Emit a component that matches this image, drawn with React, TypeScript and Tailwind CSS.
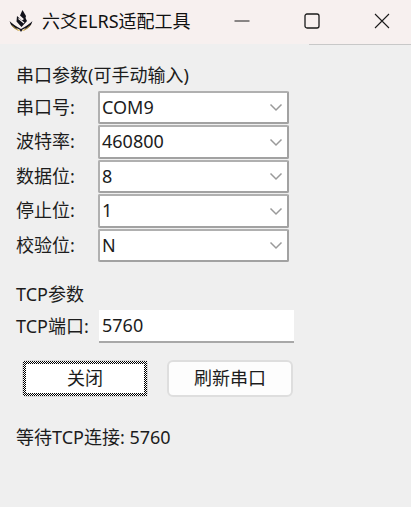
import React from "react";

const comboRows = [
  { label: "串口号:", value: "COM9" },
  { label: "波特率:", value: "460800" },
  { label: "数据位:", value: "8" },
  { label: "停止位:", value: "1" },
  { label: "校验位:", value: "N" },
];

function Logo() {
  return (
    <svg width="24" height="22" viewBox="0 0 24 22" className="shrink-0">
      <path d="M13.5 0 L17 6 L16 10 L11 5.5 Z" fill="#12121a" />
      <path d="M8 6 L13 10.5 L16.5 8 L18 11 L12.5 17 L7.5 11.5 Z" fill="#12121a" />
      <path d="M9.5 8.5 L15 13" stroke="#f7f0ef" strokeWidth="1.1" />
      <path d="M0.5 11 C2 15 6 18 10.5 19.5 L12 22 L13.5 19.5 C18 18 22 15 23.5 11 C21 13.5 17 16.5 12 19 C7 16.5 3 13.5 0.5 11 Z" fill="#12121a" />
      <path d="M1 12 C1.5 15 4 18 9 20.5 C7 17 4 14 1 12 Z" fill="#12121a" />
      <path d="M23 12 C22.5 15 20 18 15 20.5 C17 17 20 14 23 12 Z" fill="#12121a" />
      <path d="M3 15.5 C5 18 8 20 10.5 20.5" stroke="#d9b24c" strokeWidth="1" fill="none" />
      <path d="M21 15.5 C19 18 16 20 13.5 20.5" stroke="#d9b24c" strokeWidth="1" fill="none" />
    </svg>
  );
}

function TitleBar() {
  return (
    <div className="relative flex h-[44px] items-center bg-[#f7f0ef] pb-[3px] pl-[9px]">
      <Logo />
      <span className="ml-[9px] text-[18px] leading-[24px] whitespace-nowrap text-[#111]">六爻ELRS适配工具</span>
      <div className="ml-auto flex gap-[12px]">
        <div className="flex w-[58px] items-center justify-center">
          <svg width="16" height="16" viewBox="0 0 16 16">
            <path d="M0.5 8 H15.5" stroke="#1a1a1a" strokeWidth="1" />
          </svg>
        </div>
        <div className="flex w-[58px] items-center justify-center">
          <svg width="16" height="16" viewBox="0 0 16 16">
            <rect x="1" y="1" width="14" height="14" rx="2" fill="none" stroke="#1a1a1a" strokeWidth="1.3" />
          </svg>
        </div>
        <div className="flex w-[58px] items-center justify-center">
          <svg width="16" height="16" viewBox="0 0 16 16">
            <path d="M1 1 L15 15 M15 1 L1 15" stroke="#1a1a1a" strokeWidth="1.1" />
          </svg>
        </div>
      </div>
      <div className="absolute right-0 bottom-[-1px] h-px w-[102px] bg-[#c8c8c8]" />
    </div>
  );
}

function ComboRow({ label, value }: { label: string; value: string }) {
  return (
    <div className="flex h-[34.5px] items-center">
      <span className="w-[82px] text-[18px] whitespace-nowrap text-[#1c1c1c]">{label}</span>
      <div className="flex h-[33.5px] w-[191px] items-center justify-between rounded-[2px] border-2 border-[#a2a2a2] border-t-[#b0b0b0] border-l-[#b0b0b0] bg-white pr-[4px] pl-[2px]">
        <span className="text-[18px] text-[#1c1c1c]">{value}</span>
        <svg width="14" height="14" viewBox="0 0 14 14">
          <path d="M1.5 4.5 L7 10 L12.5 4.5" fill="none" stroke="#9a9a9a" strokeWidth="1.5" />
        </svg>
      </div>
    </div>
  );
}

export default function App() {
  return (
    <div className="flex h-[507px] w-[411px] flex-col overflow-hidden bg-[#efefef] font-['Noto_Sans','Noto_Sans_CJK_SC',sans-serif]">
      <TitleBar />
      <div className="flex flex-col px-[16px]">
        <div className="mt-[19px] h-[27px] text-[18px] leading-[24px] whitespace-nowrap text-[#1c1c1c]">串口参数(可手动输入)</div>
        {comboRows.map((row) => (
          <ComboRow key={row.label} label={row.label} value={row.value} />
        ))}
        <div className="mt-[19px] h-[26px] text-[18px] leading-[24px] text-[#1c1c1c]">TCP参数</div>
        <div className="mt-[2px] flex h-[33px] items-center">
          <span className="w-[83px] text-[18px] whitespace-nowrap text-[#1c1c1c]">TCP端口:</span>
          <div className="flex h-[33px] w-[195px] items-center border-b-2 border-[#a8a8a8] bg-white pl-[3px] text-[18px] text-[#1c1c1c]">
            5760
          </div>
        </div>
        <div className="mt-[17px] flex gap-[19px] pl-[6px]">
          <button className="flex h-[37px] w-[126px] items-center justify-center rounded-[4px] border border-[#d8d8d8] bg-white text-[18px] text-[#1c1c1c]">
            <span className="h-full w-full bg-[repeating-conic-gradient(#000_0%_25%,#fff_0%_50%)] bg-[length:2px_2px] p-[3px]">
              <span className="flex h-full w-full items-center justify-center bg-white">关闭</span>
            </span>
          </button>
          <button className="flex h-[37px] w-[126px] items-center justify-center rounded-[6px] border-2 border-[#dedede] bg-[#fdfdfd] text-[18px] text-[#1c1c1c]">
            刷新串口
          </button>
        </div>
        <div className="mt-[28px] text-[18px] leading-[24px] whitespace-nowrap text-[#1c1c1c]">等待TCP连接: 5760</div>
      </div>
    </div>
  );
}
